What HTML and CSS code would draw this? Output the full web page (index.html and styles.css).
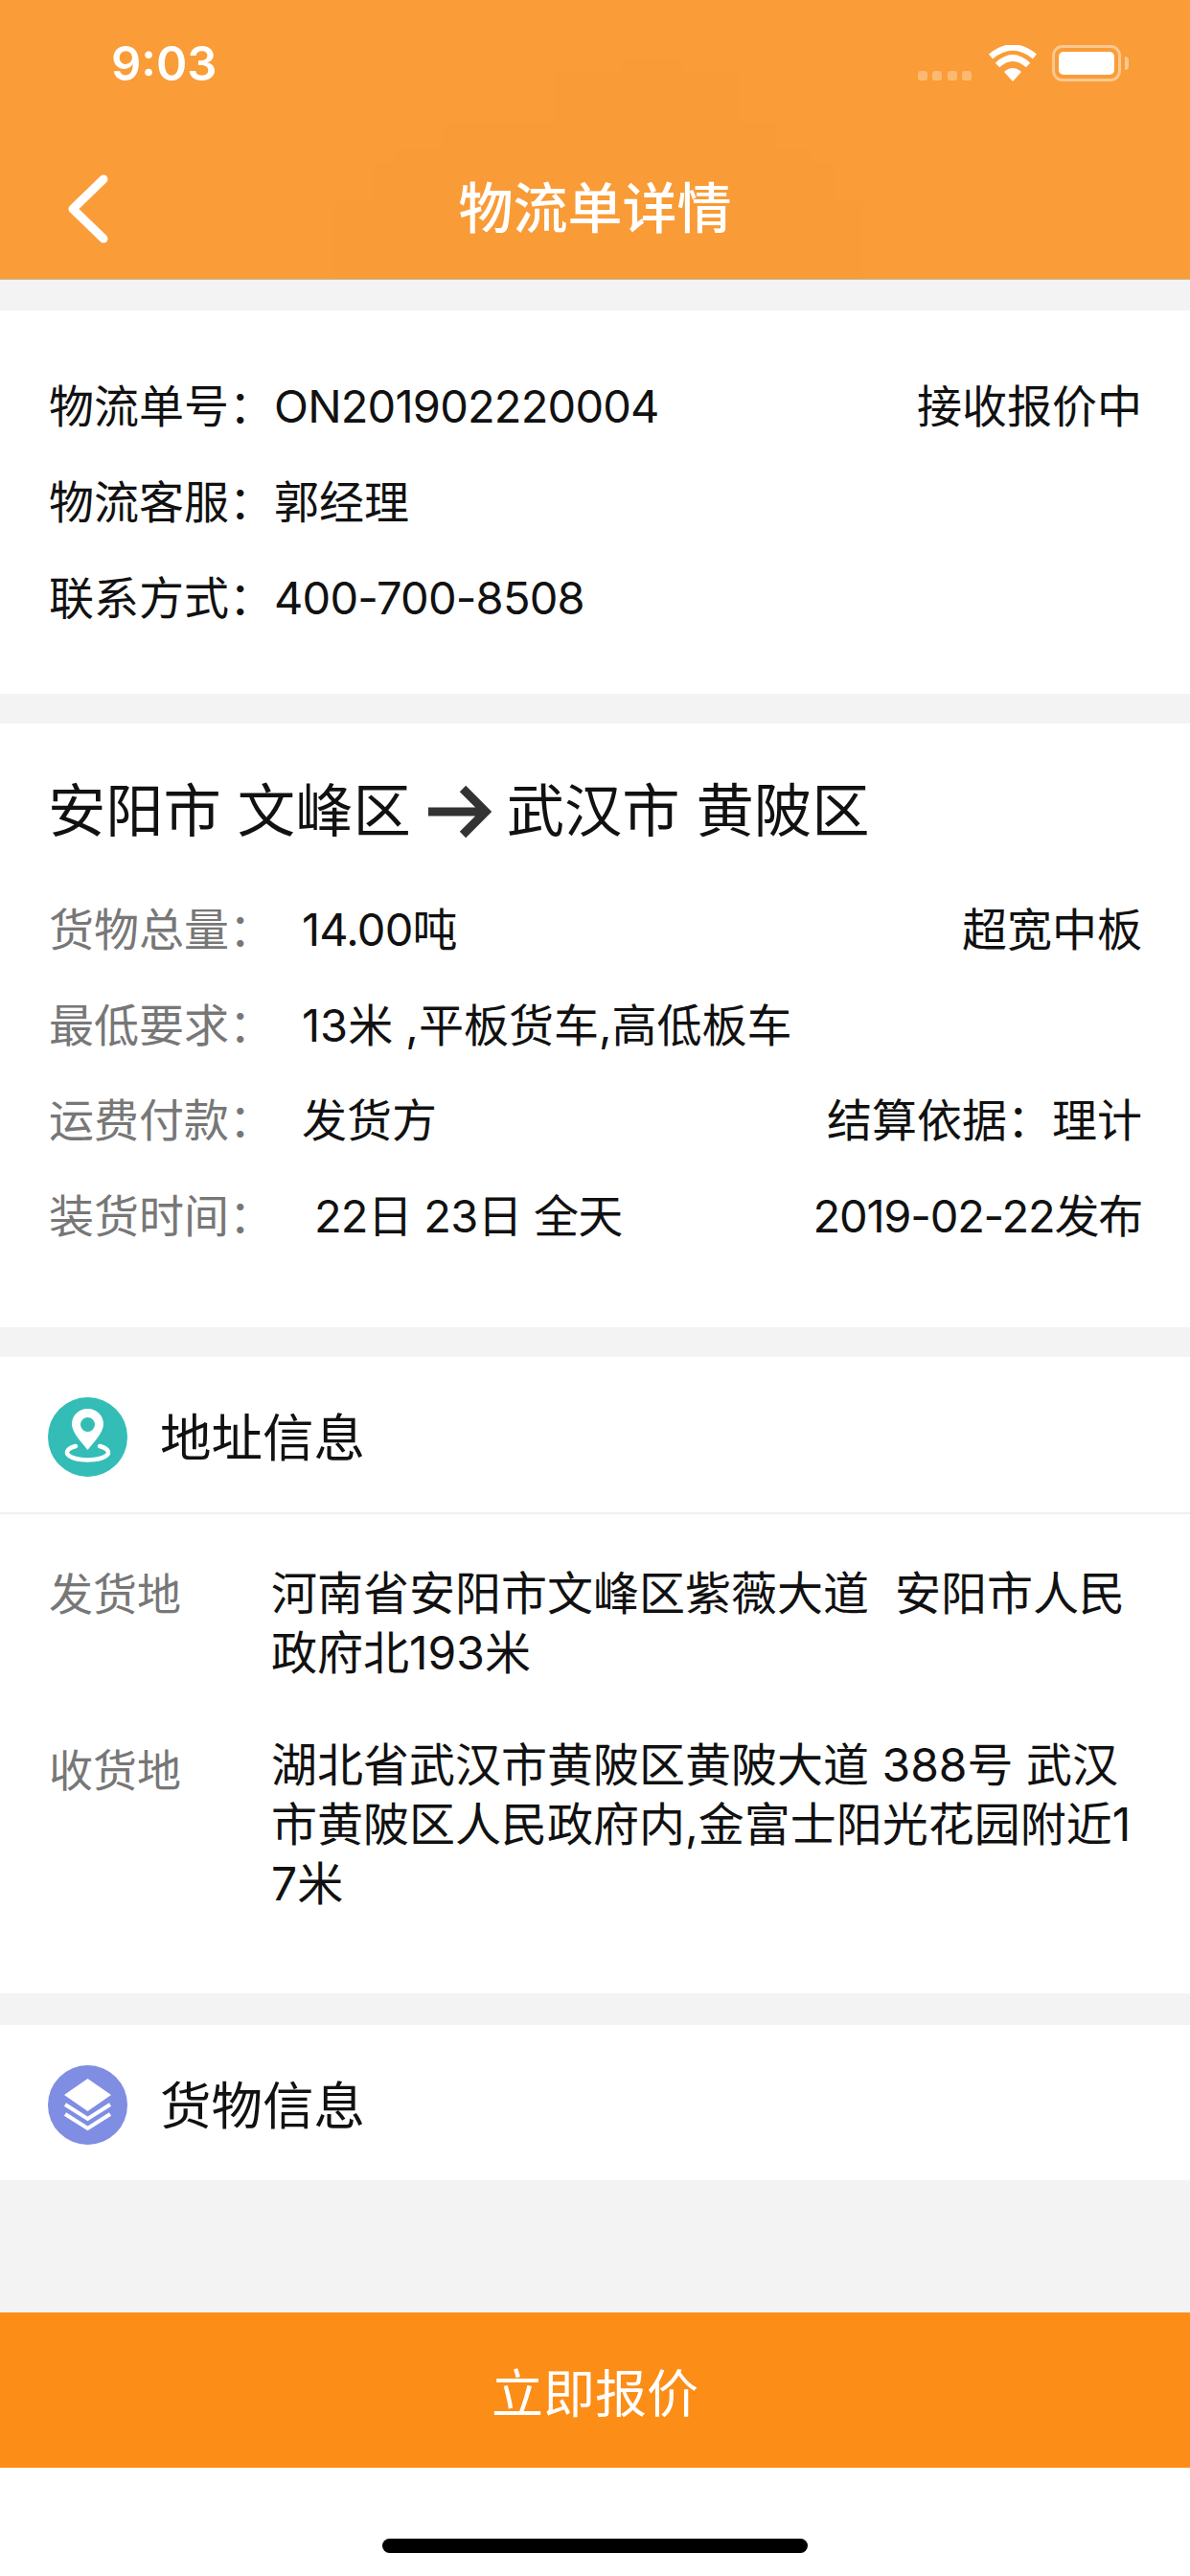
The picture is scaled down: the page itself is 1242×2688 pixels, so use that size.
FILE: index.html
```html
<!DOCTYPE html>
<html lang="zh-CN">
<head>
  <meta charset="UTF-8">
  <title>物流单详情</title>
  <link rel="stylesheet" href="styles.css">
</head>
<body>
  <div class="page">
    <header class="top">
      <svg class="top-art" width="560" height="229" viewBox="0 0 560 229">
        <path d="M4 229 V148 H43 V108 H67 V93 H116 V66 H233 V13 H302 V0 H367 V13 H425 V66 H465 V93 H502 V108 H525 V148 H555 V229 Z" fill="#f99b36"/>
      </svg>
      <div class="status">
        <span class="time">9:03</span>
        <div class="status-icons">
          <div class="signal"><i></i><i></i><i></i><i></i></div>
          <svg class="wifi" width="50" height="38" viewBox="0 0 50 38">
            <path d="M25 38 L16 28 Q25 20 34 28 Z" fill="#fff"/>
            <path d="M9 21 Q25 6 41 21" fill="none" stroke="#fff" stroke-width="6.5"/>
            <path d="M2 12 Q25 -7 48 12" fill="none" stroke="#fff" stroke-width="6.5"/>
          </svg>
          <div class="battery"><div class="battery-fill"></div></div>
          <div class="battery-nub"></div>
        </div>
      </div>
      <div class="nav">
        <svg class="back" width="44" height="72" viewBox="0 0 44 72">
          <path d="M38 5 L6 36 L38 67" fill="none" stroke="#fff" stroke-width="9" stroke-linecap="round" stroke-linejoin="round"/>
        </svg>
        <h1>物流单详情</h1>
      </div>
    </header>

    <main class="content">
      <section class="card order">
        <div class="row"><span>物流单号：<span class="latin">ON201902220004</span></span><span class="end">接收报价中</span></div>
        <div class="row"><span>物流客服：郭经理</span></div>
        <div class="row"><span>联系方式：<span class="latin">400-700-8508</span></span></div>
      </section>

      <section class="card route">
        <div class="route-title">
          <span>安阳市 文峰区</span>
          <svg width="68" height="56" viewBox="0 0 68 56">
            <path d="M2 28 H62 M38 4 L62 28 L38 52" fill="none" stroke="#333" stroke-width="9"/>
          </svg>
          <span>武汉市 黄陂区</span>
        </div>
        <div class="row"><span class="key">货物总量：</span><span class="latin">14.00吨</span><span class="end">超宽中板</span></div>
        <div class="row"><span class="key">最低要求：</span><span>13米 ,平板货车,高低板车</span></div>
        <div class="row"><span class="key">运费付款：</span><span>发货方</span><span class="end">结算依据：理计</span></div>
        <div class="row"><span class="key">装货时间：</span><span class="shift latin">22日 23日 全天</span><span class="end date">2019-02-22发布</span></div>
      </section>

      <section class="card">
        <div class="section-head line">
          <svg width="83" height="83" viewBox="0 0 83 83">
            <circle cx="41.5" cy="41.5" r="41.5" fill="#33bdb6"/>
            <path d="M29 51 A21.5 8 0 1 0 54 51" fill="none" stroke="#fff" stroke-width="4.5" stroke-linecap="round"/>
            <path fill-rule="evenodd" d="M41.5 12 C32 12 25 19 25 28 C25 37 36 48 41.5 55 C47 48 58 37 58 28 C58 19 51 12 41.5 12 Z M41.5 21 A7.5 7.5 0 1 1 41.5 36 A7.5 7.5 0 1 1 41.5 21 Z" fill="#fff"/>
          </svg>
          <span>地址信息</span>
        </div>
        <div class="address">
          <div class="addr-row">
            <span class="addr-key">发货地</span>
            <p>河南省安阳市文峰区紫薇大道&nbsp; 安阳市人民政府北193米</p>
          </div>
          <div class="addr-row">
            <span class="addr-key">收货地</span>
            <p>湖北省武汉市黄陂区黄陂大道 388号 武汉市黄陂区人民政府内,金富士阳光花园附近17米</p>
          </div>
        </div>
      </section>

      <section class="card goods">
        <div class="section-head">
          <svg width="83" height="83" viewBox="0 0 83 83">
            <circle cx="41.5" cy="41.5" r="41.5" fill="#7f8ee3"/>
            <path d="M41.5 14 L66 31 L41.5 48 L17 31 Z" fill="#fff"/>
            <path d="M18 41 L41.5 56 L65 41 M18 51 L41.5 66 L65 51" fill="none" stroke="#fff" stroke-width="4"/>
          </svg>
          <span>货物信息</span>
        </div>
      </section>
    </main>

    <button class="quote">立即报价</button>
    <div class="home"><div class="home-bar"></div></div>
  </div>
</body>
</html>
```

FILE: styles.css
```css
* {
  box-sizing: border-box;
}

body {
  margin: 0;
  font-family: Inter, "Noto Sans CJK SC", sans-serif;
  font-size: 47px;
  color: #111;
  background: #f3f3f3;
}

.page {
  width: 1242px;
  height: 2688px;
  display: flex;
  flex-direction: column;
}

.top {
  position: relative;
  height: 292px;
  background: #fa9c37;
  border-bottom: 1px solid #c9b9a6;
  color: #fff;
}

.top-art {
  position: absolute;
  left: 345px;
  top: 62px;
}

.status {
  position: relative;
  height: 132px;
  padding: 35px 64px 0 116px;
  display: flex;
  justify-content: space-between;
}

.time {
  font-size: 49px;
  font-weight: 600;
  line-height: 64px;
}

.status-icons {
  display: flex;
  align-items: flex-start;
  margin-top: 12px;
}

.signal {
  display: flex;
  gap: 5.5px;
  margin: 27px 18px 0 0;
}

.signal i {
  width: 10px;
  height: 10px;
  border-radius: 3px;
  background: rgba(255, 255, 255, 0.3);
}

.battery {
  width: 72px;
  height: 38px;
  margin-left: 16px;
  padding: 4px;
  border: 3px solid rgba(255, 255, 255, 0.45);
  border-radius: 11px;
}

.battery-fill {
  height: 100%;
  background: #fff;
  border-radius: 5px;
}

.battery-nub {
  width: 4px;
  height: 14px;
  margin: 12px 0 0 4px;
  background: rgba(255, 255, 255, 0.45);
  border-radius: 0 4px 4px 0;
}

.nav {
  position: relative;
  display: flex;
  justify-content: center;
  padding-top: 47px;
}

.back {
  position: absolute;
  left: 70px;
  top: 50px;
}

.nav h1 {
  margin: 0;
  font-size: 57px;
  font-weight: 500;
  line-height: 78px;
}

.content {
  flex: 1;
  padding-top: 32px;
  display: flex;
  flex-direction: column;
  gap: 31px;
}

.card {
  background: #fff;
}

.row {
  height: 100px;
  padding: 0 50px 0 51px;
  display: flex;
  align-items: center;
  white-space: pre;
}

.end {
  margin-left: auto;
}

.latin {
  letter-spacing: -0.8px;
}

.date {
  letter-spacing: -1.2px;
}

.order {
  height: 400px;
  padding-top: 46px;
}

.route {
  height: 630px;
  padding-top: 162px;
  position: relative;
}

.route-title {
  position: absolute;
  top: 50px;
  left: 50px;
  display: flex;
  align-items: center;
  gap: 16px;
  font-size: 60.3px;
  line-height: 84px;
}

.route .row {
  height: 99.5px;
}

.key {
  width: 264px;
  color: #777;
  flex: none;
}

.shift {
  margin-left: 13px;
}

.section-head {
  height: 162px;
  padding: 5px 51px 0 50px;
  display: flex;
  align-items: center;
  gap: 34px;
  font-size: 53.5px;
}

.section-head span {
  margin-bottom: 6px;
}

.section-head.line {
  height: 164px;
  border-bottom: 2px solid #f0f0f0;
}

.address {
  height: 500px;
  padding: 52px 51px 0;
}

.addr-row {
  display: flex;
  margin-bottom: 55px;
}

.addr-row + .addr-row .addr-key {
  padding-top: 5px;
}

.addr-key {
  width: 232px;
  flex: none;
  color: #777;
  font-size: 46px;
  line-height: 62px;
}

.addr-row p {
  margin: 0;
  width: 908px;
  font-size: 48px;
  line-height: 62px;
  word-break: break-all;
}

.goods {
  margin-top: 2px;
}

.quote {
  height: 162px;
  border: 0;
  padding: 0;
  background: #fc8d17;
  color: #fff;
  font-family: inherit;
  font-size: 54px;
  font-weight: 400;
}

.home {
  height: 113px;
  background: #fff;
  padding-top: 74px;
  display: flex;
  justify-content: center;
}

.home-bar {
  width: 444px;
  height: 15px;
  border-radius: 8px;
  background: #000;
}
```
